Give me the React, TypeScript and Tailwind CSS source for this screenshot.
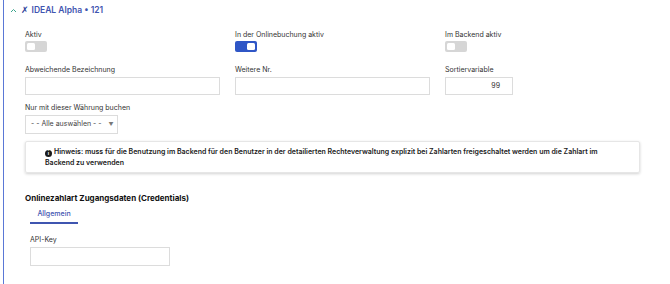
import { useState } from "react";

function Toggle({ on }: { on: boolean }) {
  return (
    <div
      className={`flex h-[11px] w-[22px] items-center rounded-[2px] px-[2px] ${
        on ? "justify-end bg-[#2f56c6]" : "justify-start bg-[#d6d6d6]"
      }`}
    >
      <div className="h-[7px] w-[8px] rounded-[1.5px] bg-white" />
    </div>
  );
}

function Label({ children }: { children: React.ReactNode }) {
  return <div className="h-[10px] text-[7px] leading-[10px] text-[#333]">{children}</div>;
}

export default function App() {
  const [sort] = useState("99");

  return (
    <div
      className="h-[284px] w-[670px] overflow-hidden bg-white pl-[3px] text-[#222]"
      style={{ fontFamily: "Inter, 'Noto Sans', sans-serif" }}
    >
      <div className="h-full border-l-[1.5px] border-[#5a78d6]">
        {/* header */}
        <div className="flex items-center gap-[3px] pl-[6px] pt-[5px] text-[8.5px] font-semibold leading-[10px] text-[#3f55b0]">
          <svg width="7" height="5" viewBox="0 0 7 5" className="mr-[1px]">
            <path d="M1 4 L3.5 1.5 L6 4" fill="none" stroke="#3aa58c" strokeWidth="1" />
          </svg>
          <span className="text-[9px] font-bold text-[#2d3f9a]" style={{ fontFamily: "'DejaVu Sans', sans-serif" }}>
            ✗
          </span>
          <span>IDEAL Alpha • 121</span>
        </div>

        <div className="pl-[21px] pt-[15px]">
          {/* toggles */}
          <div className="flex">
            <div className="w-[210px]">
              <Label>Aktiv</Label>
              <div className="mt-[1px]">
                <Toggle on={false} />
              </div>
            </div>
            <div className="w-[210px]">
              <Label>In der Onlinebuchung aktiv</Label>
              <div className="mt-[1px]">
                <Toggle on />
              </div>
            </div>
            <div className="w-[210px]">
              <Label>Im Backend aktiv</Label>
              <div className="mt-[1px]">
                <Toggle on={false} />
              </div>
            </div>
          </div>

          {/* inputs */}
          <div className="mt-[13px] flex">
            <div className="w-[210px]">
              <Label>Abweichende Bezeichnung</Label>
              <div className="mt-[2px] h-[18px] w-[195px] border border-[#dcdcdc]" />
            </div>
            <div className="w-[210px]">
              <Label>Weitere Nr.</Label>
              <div className="mt-[2px] h-[18px] w-[195px] border border-[#dcdcdc]" />
            </div>
            <div className="w-[210px]">
              <Label>Sortiervariable</Label>
              <div className="mt-[2px] flex h-[18px] w-[68px] items-center justify-end border border-[#dcdcdc] pr-[12px] text-[7px] text-[#333]">
                {sort}
              </div>
            </div>
          </div>

          {/* currency */}
          <div className="mt-[8px]">
            <Label>Nur mit dieser Währung buchen</Label>
            <div className="mt-[2px] flex h-[19px] w-[93px] items-center border border-[#dcdcdc] pl-[5px] text-[7px] text-[#444]">
              <span>- - Alle auswählen - -</span>
              <span className="ml-[7px] text-[5px] text-[#777]">▼</span>
            </div>
          </div>

          {/* hint */}
          <div className="mt-[7px] w-[615px] rounded-[2px] border border-[#e6e6e6] py-[4px] pl-[19px] pr-[20px] text-[7px] leading-[11px] text-[#1a1a1a] shadow-[0_1px_3px_rgba(0,0,0,0.18)]">
            <span className="mr-[2px] inline-flex h-[7px] w-[7px] translate-y-[1px] items-center justify-center rounded-full bg-[#1a1a1a] align-baseline text-[5px] font-bold leading-none text-white">
              i
            </span>
            <span className="font-semibold">
              Hinweis: muss für die Benutzung im Backend für den Benutzer in der detailierten Rechteverwaltung explizit bei Zahlarten freigeschaltet werden um die Zahlart im Backend zu verwenden
            </span>
          </div>

          {/* credentials */}
          <div className="mt-[20px] text-[8px] font-bold leading-[11px] text-[#111]">
            Onlinezahlart Zugangsdaten (Credentials)
          </div>
          <div className="ml-[5px] mt-[5px] w-[48px] border-b-[2px] border-[#3f55b0] pb-[3px] text-center text-[7px] font-medium leading-[10px] text-[#3f55b0]">
            Allgemein
          </div>
          <div className="ml-[5px] mt-[11px]">
            <Label>API-Key</Label>
            <div className="mt-[2px] h-[19px] w-[140px] border border-[#dcdcdc]" />
          </div>
        </div>
      </div>
    </div>
  );
}
